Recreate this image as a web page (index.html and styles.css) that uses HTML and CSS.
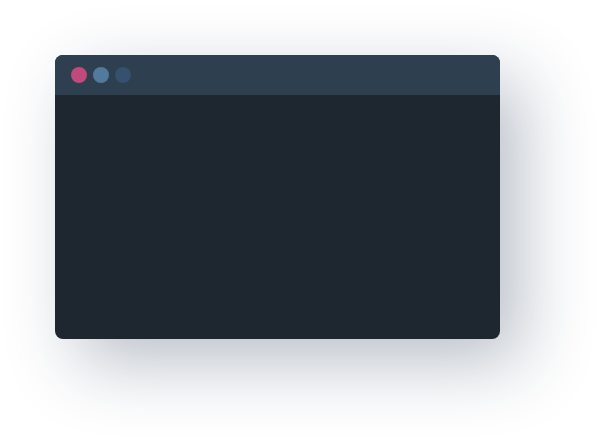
FILE: index.html
```html
<!DOCTYPE html>
<html>
<head>
<meta charset="utf-8">
<link rel="stylesheet" href="styles.css">
</head>
<body>
<div class="stage">
  <div class="window">
    <div class="titlebar">
      <span class="dot dot-red"></span>
      <span class="dot dot-blue"></span>
      <span class="dot dot-navy"></span>
    </div>
    <div class="content"></div>
  </div>
</div>
</body>
</html>
```

FILE: styles.css
```css
html, body {
  margin: 0;
  padding: 0;
  background: #ffffff;
  min-height: 100vh;
}
.stage {
  padding: 55px 105px 105px 55px;
}
.window {
  width: 445px;
  height: 284px;
  border-radius: 8px;
  overflow: hidden;
  background: #1e2730;
  box-shadow: 22px 24px 70px rgba(25, 45, 75, 0.3);
  display: flex;
  flex-direction: column;
}
.titlebar {
  height: 40px;
  background: #2e3f4f;
  display: flex;
  align-items: center;
  gap: 6px;
  padding-left: 16px;
}
.dot {
  width: 16px;
  height: 16px;
  border-radius: 50%;
}
.dot-red { background: #c04a7b; }
.dot-blue { background: #537a9c; }
.dot-navy { background: #35516d; }
.content {
  flex: 1;
}
```
